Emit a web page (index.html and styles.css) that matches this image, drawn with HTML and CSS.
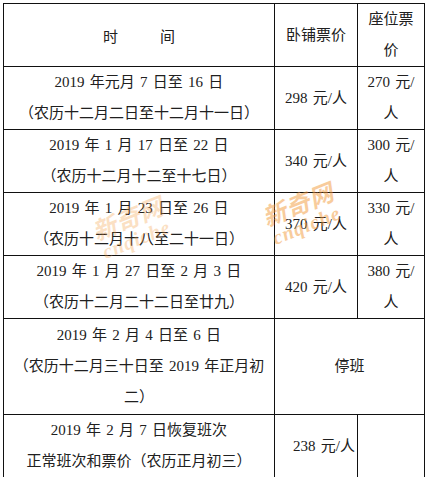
FILE: index.html
```html
<!DOCTYPE html>
<html lang="zh">
<head>
<meta charset="utf-8">
<title>票价表</title>
<link rel="stylesheet" href="styles.css">
</head>
<body>
<div class="sheet">
  <table class="fares">
    <colgroup>
      <col class="c-time">
      <col class="c-bed">
      <col class="c-seat">
    </colgroup>
    <tr class="r-head">
      <td class="head-time">时<span class="gap"></span>间</td>
      <td>卧铺票价</td>
      <td>座位票<br>价</td>
    </tr>
    <tr class="r-std">
      <td>2019 年元月 7 日至 16 日<br>（农历十二月二日至十二月十一日）</td>
      <td>298 元/人</td>
      <td>270 元/<br>人</td>
    </tr>
    <tr class="r-std">
      <td>2019 年 1 月 17 日至 22 日<br>（农历十二月十二至十七日）</td>
      <td>340 元/人</td>
      <td>300 元/<br>人</td>
    </tr>
    <tr class="r-std">
      <td>2019 年 1 月 23 日至 26 日<br>（农历十二月十八至二十一日）</td>
      <td>370 元/人</td>
      <td>330 元/<br>人</td>
    </tr>
    <tr class="r-std">
      <td>2019 年 1 月 27 日至 2 月 3 日<br>（农历十二月二十二日至廿九）</td>
      <td>420 元/人</td>
      <td>380 元/<br>人</td>
    </tr>
    <tr class="r-tall">
      <td>2019 年 2 月 4 日至 6 日<br>（农历十二月三十日至 2019 年正月初<br>二）</td>
      <td colspan="2">停班</td>
    </tr>
    <tr class="r-last">
      <td>2019 年 2 月 7 日恢复班次<br>正常班次和票价（农历正月初三）</td>
      <td class="last-price">238 元/人</td>
      <td></td>
    </tr>
  </table>
  <div class="wm wm-a"><span class="wm-cn">新奇网</span><span class="wm-en">cnqiche</span></div>
  <div class="wm wm-b"><span class="wm-cn">新奇网</span><span class="wm-en">cnqiche</span></div>
</div>
</body>
</html>
```

FILE: styles.css
```css
html, body {
  margin: 0;
  padding: 0;
  background: #ffffff;
}

.sheet {
  position: relative;
  padding: 3px 0 0 3px;
  width: 425px;
  overflow: hidden;
  height: 474px;
}

.fares {
  border-collapse: collapse;
  width: 421px;
  table-layout: fixed;
  font-family: "Liberation Serif", "Noto Sans CJK SC", serif;
  font-size: 15px;
  line-height: 31px;
  word-spacing: 1.5px;
  color: #202020;
}

.c-time { width: 271px; }
.c-bed { width: 83px; }
.c-seat { width: 67px; }

.fares td {
  border: 1px solid #111111;
  padding: 0;
  text-align: center;
  vertical-align: middle;
}

.r-head { height: 62px; }
.r-std { height: 63px; }
.r-tall { height: 96px; }
.r-last { height: 61px; }

.head-time {
  font-family: "Noto Sans CJK SC", sans-serif;
}

.gap {
  display: inline-block;
  width: 42px;
}

.last-price {
  padding-left: 18px !important;
  text-align: left !important;
}

.wm {
  position: absolute;
  display: flex;
  flex-direction: column;
  align-items: center;
  color: #f39a3c;
  pointer-events: none;
  transform: rotate(-22deg);
}

.wm-cn {
  font-family: "Noto Sans CJK SC", sans-serif;
  font-weight: 700;
  font-style: italic;
  font-size: 24px;
  line-height: 26px;
  letter-spacing: 1px;
}

.wm-en {
  font-family: "Liberation Serif", serif;
  font-weight: 700;
  font-style: italic;
  font-size: 20px;
  line-height: 20px;
  letter-spacing: 1px;
}

.wm-a {
  left: 94px;
  top: 204px;
  opacity: 0.3;
}

.wm-b {
  left: 264px;
  top: 190px;
  opacity: 0.5;
}
```
